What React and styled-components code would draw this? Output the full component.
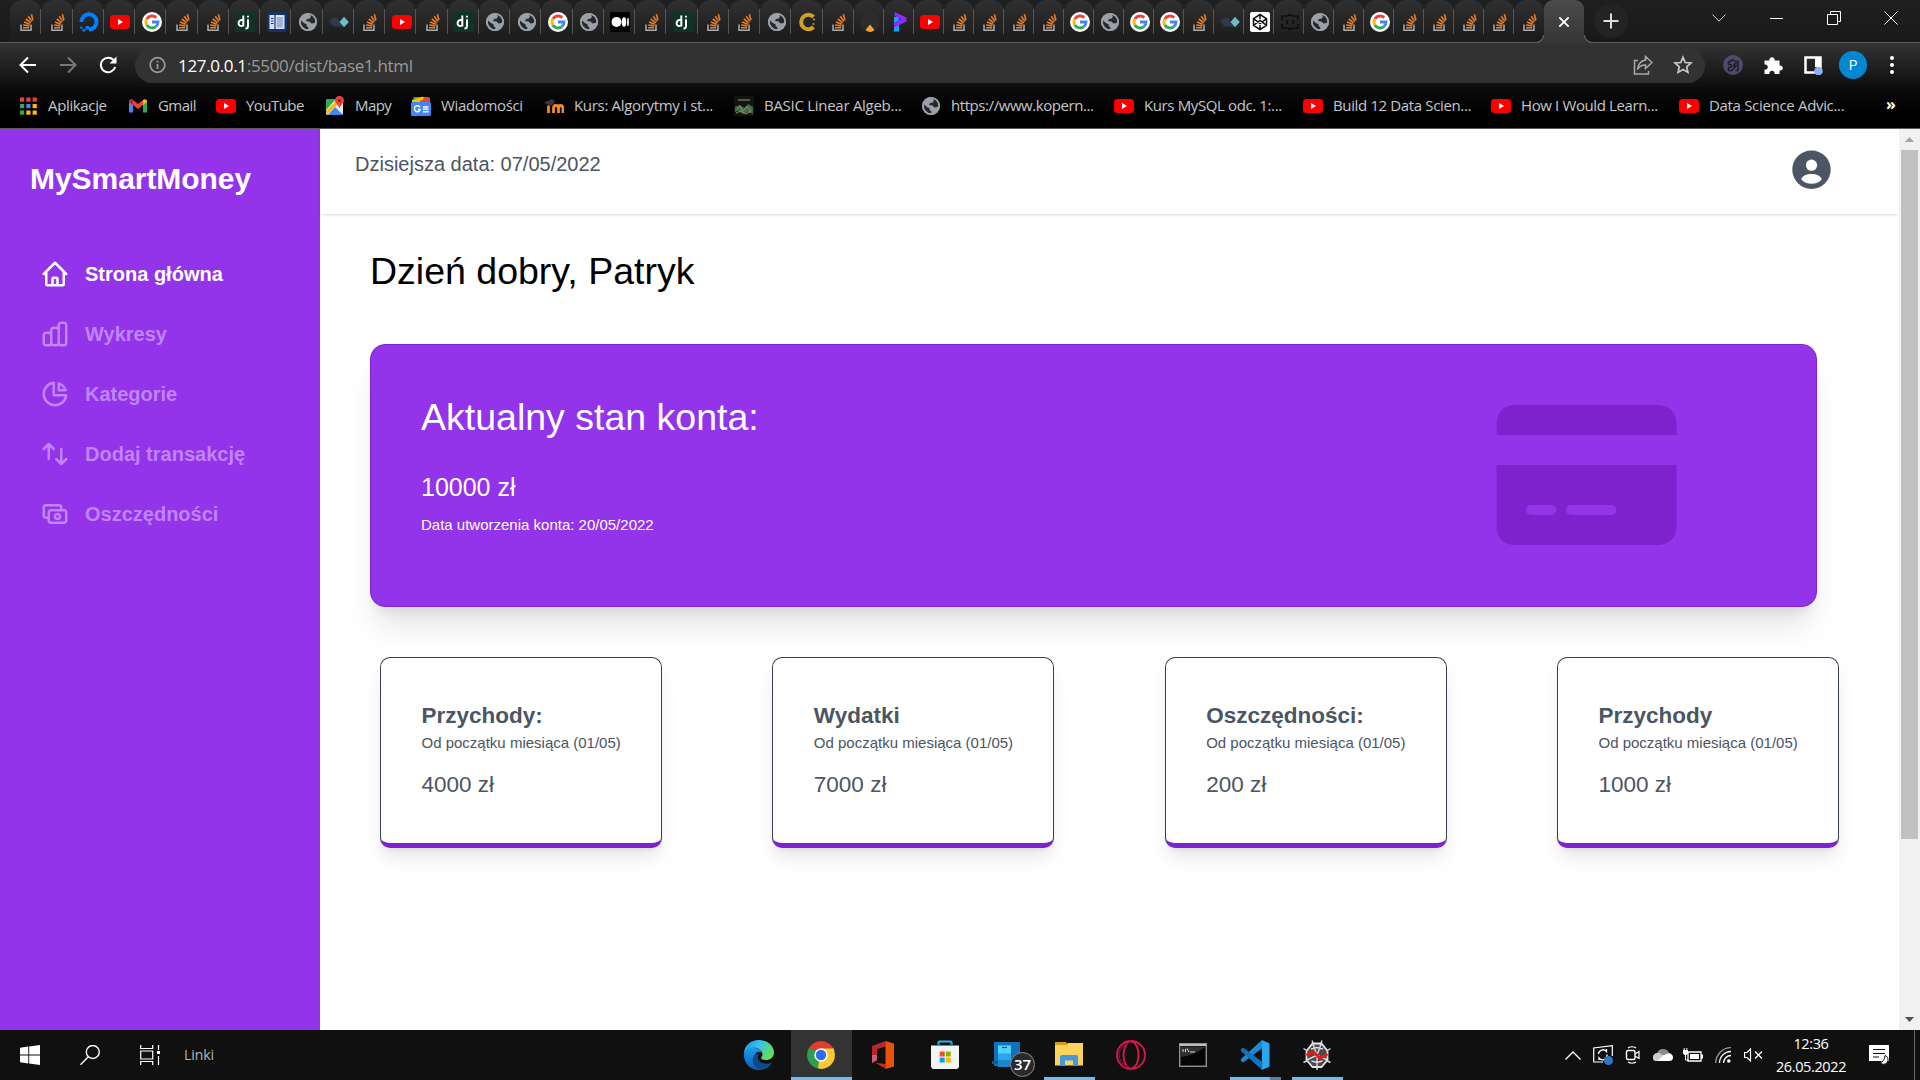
import React from "react";
import styled, { createGlobalStyle } from "styled-components";

const Global = createGlobalStyle`
  *, *::before, *::after { box-sizing: border-box; }
  body { margin: 0; overflow: hidden; background: #fff; }
  p, h1, h2, h3 { margin: 0; font-weight: 400; }
  svg { display: block; flex: none; }
`;

const sans = `"Liberation Sans", Arial, sans-serif`;
const ui = `"Open Sans", "Noto Sans", sans-serif`;

const Screen = styled.div`
  width: 1920px; height: 1080px; display: flex; flex-direction: column;
  overflow: hidden; font-family: ${sans};
`;

/* ---------- browser ---------- */
const TabStrip = styled.div`
  height: 43px; flex: none; display: flex; padding-left: 10px;
  background: linear-gradient(#1f1f1f, #191919); box-shadow: inset 0 -1px 0 #5a5a5a;
`;
const Tab = styled.div`
  width: ${(p) => p.$w}px; flex: none; height: 42px; display: flex; align-items: center; justify-content: center;
  border-radius: 12px 12px 0 0; background: linear-gradient(#303030, #1d1d1d 36px);
`;
const TabInner = styled.div`
  width: 100%; height: 25px; margin-top: 1px; padding-left: 3px; display: flex; align-items: center; justify-content: center;
  border-right: 1px solid ${(p) => (p.$last ? "transparent" : "#555")};
`;
const ActiveTab = styled.div`
  position: relative; width: 40px; height: 43px; flex: none; display: flex; align-items: center; justify-content: center;
  background: linear-gradient(#4b4b4b, #353535); border-radius: 9px 9px 0 0;
  &::before, &::after { content: ""; position: absolute; bottom: 0; width: 8px; height: 8px; }
  &::before { right: 100%; background: radial-gradient(circle at 0 0, #1a1a1a 6.5px, #5a5a5a 7px, #5a5a5a 7.8px, #353535 8.3px); }
  &::after { left: 100%; background: radial-gradient(circle at 100% 0, #1a1a1a 6.5px, #5a5a5a 7px, #5a5a5a 7.8px, #353535 8.3px); }
`;
const NewTab = styled.div`
  width: 34px; height: 34px; margin: 4px 0 0 10px; border-radius: 50%; background: #232323;
  display: flex; align-items: center; justify-content: center;
`;
const WindowButtons = styled.div`
  margin-left: auto; height: 36px; display: flex; align-items: center;
`;
const WinBtn = styled.div`
  width: 57.4px; display: flex; justify-content: center;
`;
const Toolbar = styled.div`
  height: 44px; flex: none; display: flex; align-items: center; padding: 0 8px;
  background: linear-gradient(#343434, #0e0e0e);
`;
const ToolBtn = styled.div`
  width: ${(p) => p.$w || 40}px; flex: none; display: flex; align-items: center; justify-content: center;
`;
const Omnibox = styled.div`
  width: 1570px; height: 35px; margin-left: 7px; margin-right: 8px; border-radius: 18px; background: #323232;
  display: flex; align-items: center; padding: 0 2px 0 12px;
`;
const Url = styled.div`
  flex: 1; margin-left: 11px; padding-top: 1px; font: 17px/24px ${ui}; letter-spacing: -0.33px; color: #9a9a9a;
  span { color: #fff; }
`;
const Profile = styled.div`
  width: 28px; height: 28px; border-radius: 50%; background: #0288d1; color: #fff;
  font: 15px/27px ${ui}; text-align: center;
`;
const Bookmarks = styled.div`
  height: 42px; flex: none; display: flex; align-items: center; padding: 0 0 4px 18px;
  background: linear-gradient(#0b0b0b, #000 30px); box-shadow: inset 0 -1px 0 #5c5c5c;
`;
const Bookmark = styled.div`
  width: ${(p) => p.$w}px; flex: none; display: flex; align-items: center; gap: 10px; white-space: nowrap;
  font: 15px/22px ${ui}; letter-spacing: ${(p) => p.$ls}px; color: #c4c6ca;
  span { margin-top: -2px; }
`;
const More = styled.div`
  font: 700 16px/20px ${ui}; color: #fff; margin: -5px 0 0 19px;
`;

/* ---------- page ---------- */
const Viewport = styled.div`
  height: 901px; flex: none; display: flex; background: #fff;
`;
const Sidebar = styled.aside`
  width: 320px; flex: none; background: #9333ea; padding: 31px 30px 0; display: flex; flex-direction: column;
`;
const Brand = styled.h1`
  font-weight: 700; font-size: 30px; line-height: 37px; letter-spacing: -0.05px; color: #fff;
`;
const Nav = styled.nav`
  margin-top: 47px; display: flex; flex-direction: column;
`;
const NavItem = styled.div`
  height: 60px; padding-left: 10px; display: flex; align-items: center; gap: 15px;
  font-weight: 700; font-size: 20px; line-height: 25px; color: ${(p) => (p.$active ? "#fff" : "#c084fc")};
`;
const Main = styled.main`
  width: 1579px; flex: none; display: flex; flex-direction: column;
`;
const Header = styled.header`
  height: 85px; flex: none; padding: 21px 67px 0 35px; display: flex; justify-content: space-between; align-items: flex-start;
  color: #4b5563; font-size: 20px; line-height: 25px;
  box-shadow: 0 1px 3.75px rgba(0,0,0,.1), 0 1px 2.5px -1.25px rgba(0,0,0,.1);
  p { margin-top: 2px; }
`;
const Content = styled.section`
  padding: 35px 0 0 50px; display: flex; flex-direction: column;
`;
const Greeting = styled.h2`
  font-size: 37.5px; line-height: 45px; color: #000;
`;
const Balance = styled.div`
  width: 1447px; height: 263px; margin-top: 50px; padding: 50px 139px 0 50px; border: 1px solid #7e22ce; border-radius: 15px;
  background: #9333ea; color: #fff; display: flex; justify-content: space-between; align-items: flex-start;
  box-shadow: 0 25px 31.25px -6.25px rgba(0,0,0,.1), 0 10px 12.5px -7.5px rgba(0,0,0,.1);
`;
const BalanceTitle = styled.h3`
  font-size: 37.5px; line-height: 45px;
`;
const BalanceAmount = styled.p`
  margin-top: 32px; font-size: 25px; line-height: 30px;
`;
const BalanceNote = styled.p`
  margin-top: 13px; font-size: 15px; line-height: 20px;
`;
const Stats = styled.div`
  width: 1459px; margin: 50px 0 0 10px; display: flex; justify-content: space-between;
`;
const StatCard = styled.div`
  width: 282px; height: 191px; padding: 43px 0 0 40.5px; border: 1px solid #374151; border-bottom: 5px solid #7e22ce;
  border-radius: 10px; background: #fff; color: #4b5563;
  box-shadow: 0 12.5px 18.75px -3.75px rgba(0,0,0,.1), 0 5px 7.5px -5px rgba(0,0,0,.1);
`;
const StatTitle = styled.h3`
  font-weight: 700; font-size: 22.5px; line-height: 30px;
`;
const StatNote = styled.p`
  margin-top: 2px; font-size: 15px; line-height: 20px;
`;
const StatAmount = styled.p`
  margin-top: 17px; font-size: 22.5px; line-height: 30px;
`;
const Scrollbar = styled.div`
  width: 21px; flex: none; background: #f1f1f1; display: flex; flex-direction: column; align-items: center;
`;
const ScrollArrow = styled.div`
  height: 21px; width: 21px; display: flex; align-items: center; justify-content: center;
`;
const Thumb = styled.div`
  width: 17px; height: 689px; margin-bottom: auto; background: #c1c1c1;
`;

/* ---------- taskbar ---------- */
const Taskbar = styled.footer`
  height: 50px; flex: none; background: #101010; display: flex; color: #fff; font-family: ${ui};
`;
const SysBtn = styled.div`
  width: 60px; height: 50px; display: flex; align-items: center; justify-content: center;
`;
const Links = styled.div`
  width: 549px; padding-left: 4px; font-size: 14px; line-height: 49px; letter-spacing: -0.1px; color: #b5b5b5;
`;
const TaskApp = styled.div`
  position: relative; width: 62px; height: 50px; flex: none; display: flex; align-items: center; justify-content: center;
  background: ${(p) => (p.$focus ? "linear-gradient(90deg, #333 61px, transparent 61px)" : "transparent")};
  & > svg { margin-right: 2px; }
  &::after {
    content: ""; position: absolute; bottom: 0; left: ${(p) => (p.$focus ? 0 : 5)}px; right: ${(p) => (p.$focus ? 1 : 6)}px; height: 3px;
    background: ${(p) => (p.$split ? "linear-gradient(90deg, #76b9ed 40px, #56809f 40px)" : p.$open ? "#76b9ed" : "transparent")};
  }
`;
const Badge = styled.span`
  position: absolute; left: 33px; top: 22px; width: 25px; height: 25px; border-radius: 50%; background: #2a2a2a;
  border: 1px solid #8b8b8b; font: 600 15px/22px ${ui}; text-align: center;
`;
const Tray = styled.div`
  margin-left: auto; display: flex; align-items: center;
`;
const TrayBtn = styled.div`
  width: 30px; display: flex; justify-content: center;
`;
const Clock = styled.div`
  width: 86px; text-align: center; font-size: 14.5px; line-height: 23px; letter-spacing: -0.38px; padding-bottom: 1px;
`;
const Notice = styled.div`
  width: 50px; display: flex; justify-content: center;
`;
const ShowDesktop = styled.div`
  width: 6px; height: 50px; border-left: 1px solid #666; margin-left: 10px;
`;

/* ---------- drawings ---------- */
const Svg = ({ s = 20, w, h, vb = "0 0 20 20", children, ...r }) => (
  <svg width={w || s} height={h || s} viewBox={vb} fill="none" {...r}>{children}</svg>
);

const Stack = () => (
  <Svg>
    <path d="M4 12.5V18.2H14V12.5" stroke="#a3adb8" strokeWidth="1.5" />
    <path d="M6 15.8h6.2M6.2 13l6.1.9M7 10.1l5.8 2.1M8.8 7l5 3.8M11.2 4.2l3.7 5.2M14.4 2.3l1.5 6" stroke="#ee7a22" strokeWidth="1.6" />
  </Svg>
);
const YouTube = () => (
  <Svg><rect x="0" y="3" width="20" height="14" rx="3.5" fill="#f00" /><path d="M8 7l5 3-5 3z" fill="#fff" /></Svg>
);
const Google = () => (
  <Svg>
    <circle cx="10" cy="10" r="10" fill="#fff" />
    <g strokeWidth="2.9">
      <path d="M4.8 7A6 6 0 0 1 14.2 5.7" stroke="#ea4335" />
      <path d="M4.8 13A6 6 0 0 1 4.8 7" stroke="#fbbc05" />
      <path d="M14 14.5A6 6 0 0 1 4.8 13" stroke="#34a853" />
      <path d="M10 10h6A6 6 0 0 1 14 14.5" stroke="#4285f4" />
    </g>
  </Svg>
);
const Globe = () => (
  <Svg>
    <circle cx="10" cy="10" r="9" fill="#9aa0a6" />
    <path d="M3 8.5l3.5 3 2 .5v2l2 1.5-.5 2.2A8 8 0 0 1 3 8.5zM9 2.6l2.2 0 1.8 1.4-1 2.5-3 .5-1 2 3.5.5 2 2 3-.5 1-1.5A7.5 7.5 0 0 0 12 2.5z" fill="#26282b" />
    <circle cx="10" cy="10" r="8.2" stroke="#9aa0a6" strokeWidth="1.7" />
  </Svg>
);
const Django = () => (
  <Svg>
    <rect width="20" height="20" fill="#103328" />
    <path d="M8.3 3.5V13.6Q3.6 15 3.6 11.2T8.3 8.2M13 7.2V14Q13 16.5 10.5 16.5M13 3.8V5.5" stroke="#fff" strokeWidth="2" />
  </Svg>
);
const Ocean = () => (
  <Svg>
    <path d="M10 17.5A7.6 7.6 0 1 0 2.4 10" stroke="#0080ff" strokeWidth="4" />
    <path d="M6.5 14h3.5v3.5h-3.5zM3.5 17h3v2.5h-3zM1.2 14.5h2.3v2.3h-2.3z" fill="#0080ff" />
  </Svg>
);
const Board = () => (
  <Svg>
    <rect width="20" height="20" rx="3" fill="#14336b" /><rect x="2.5" y="3" width="15" height="14" fill="#d7e1f2" />
    <path d="M8 3v14" stroke="#14336b" strokeWidth="1.2" /><path d="M4 6.5h2.5M4 9h2.5M4 11.5h2.5" stroke="#14336b" />
    <rect x="9.8" y="5" width="6" height="10.5" fill="#9db1d3" />
  </Svg>
);
const Diamonds = () => (
  <Svg><path d="M0 10l4-4.5h4l6 9H5z" fill="#2e3a4c" /><path d="M15 4.8L19.8 10 15 15.2 10.5 10z" fill="#74b9cb" /></Svg>
);
const Medium = () => (
  <Svg><rect width="20" height="20" rx="1" fill="#000" /><circle cx="6.5" cy="10" r="5" fill="#fff" /><ellipse cx="14" cy="10" rx="2.2" ry="4.7" fill="#fff" /><ellipse cx="18" cy="10" rx=".9" ry="4.3" fill="#fff" /></Svg>
);
const GoldC = () => (
  <Svg><path d="M15.5 5A7.2 7.2 0 1 0 15.5 15" stroke="#cf9f27" strokeWidth="4" /><path d="M15 7.5h2M14.5 12h2" stroke="#cf9f27" strokeWidth="1.5" /></Svg>
);
const DarkBall = () => (
  <Svg><circle cx="10" cy="10" r="10" fill="#2e2b2e" /><path d="M5.500 18L10 12.500l4.500 5.500Q10 22 5.500 18z" fill="#f2a134" /></Svg>
);
const PurpleP = () => (
  <Svg><path d="M4 5h5v14.500H4z" fill="#11a0ff" /><path d="M4.500 0L16.500 5.500v4L4 15.500V10.500l7-3.500L4.500 4z" fill="#8b2cf5" /></Svg>
);
const CodePen = () => (
  <Svg>
    <rect width="20" height="20" rx="2" fill="#fff" />
    <path d="M10 2.5l6.5 4.2v6.6L10 17.5l-6.5-4.2V6.7zM10 2.5V7M10 13v4.5M3.500 6.700L10 11.500l6.500-4.800M3.500 13.300L10 8.500l6.500 4.800" stroke="#111" strokeWidth="1.5" />
  </Svg>
);
const Brackets = () => (
  <Svg><path d="M2 8V4h6l2-1.5L12 4h6v4M2 12v4h6l2 1.5 2-1.5h6v-4M7 8v4M13 8v4" stroke="#050505" strokeWidth="1.2" /></Svg>
);
const icons = { s: Stack, y: YouTube, g: Google, w: Globe, d: Django, o: Ocean, b: Board, a: Diamonds, m: Medium, c: GoldC, k: DarkBall, p: PurpleP, n: CodePen, r: Brackets };
const wideTabs = "ssoygssdbwasysdwwgwmsdsswcs".split("");
const slimTabs = "kpyssssgwggsanrwsgsssss".split("");

const AppsGrid = () => (
  <Svg>
    {["#ea4335", "#ea4335", "#ea4335", "#34a853", "#4285f4", "#fbbc05", "#34a853", "#fbbc05", "#fbbc05"].map((c, i) => (
      <rect key={i} x={2 + (i % 3) * 6.3} y={1.5 + Math.floor(i / 3) * 6.5} width="4.2" height="4.2" fill={c} />
    ))}
  </Svg>
);
const Gmail = () => (
  <Svg>
    <path d="M1 5v11.500h4V8z" fill="#4285f4" /><path d="M19 5v11.500h-4V8z" fill="#34a853" />
    <path d="M1 4.500Q3 2.500 5 4l5 4 5-4v5l-5 4-5-4-4-2.500z" fill="#ea4335" /><path d="M15 4q2-1.500 4 .5V6l-4 3z" fill="#fbbc05" /><path d="M1 4.500Q3 2.500 5 4v5L1 6z" fill="#c5221f" />
  </Svg>
);
const Maps = () => (
  <Svg>
    <rect x="1" y="3" width="17" height="16" rx="2" fill="#e8eaed" />
    <path d="M1 5q0-2 2-2h8L1 14z" fill="#34a853" /><path d="M3 19L10 11l8 8z" fill="#4285f4" /><path d="M1 15L12 4l2 3L2 19z" fill="#fbbc05" />
    <path d="M14.500 0a4.500 4.500 0 0 1 4.500 4.500c0 3-3.500 4-4.500 8-1-4-4.500-5-4.500-8A4.500 4.500 0 0 1 14.500 0z" fill="#ea4335" /><circle cx="14.500" cy="4.500" r="1.600" fill="#811411" />
  </Svg>
);
const News = () => (
  <Svg>
    <path d="M2.500 1h15v6h-15z" fill="#34a853" /><path d="M1 4l11-3.500 2 6H1z" fill="#fbbc05" /><path d="M9 5l7-4 3 1v6H9z" fill="#ea4335" />
    <rect x="0" y="6" width="20" height="14" rx="1.5" fill="#4285f4" />
    <path d="M9 11.200A3 3 0 1 0 9.300 13.500H6.800M12 11h5.500M12 13.300h5.500M12 15.700h5.500" stroke="#fff" strokeWidth="1.4" />
  </Svg>
);
const Moodle = () => (
  <Svg>
    <path d="M4.500 17V9.500M9.500 17v-4.500q0-3 2.500-3t2.500 3V17M14.500 12.500q0-3 2.200-3t2.300 3V17" stroke="#f08a24" strokeWidth="2.800" />
    <path d="M0 6.500L8 3l3 2.500-3 4-5-1z" fill="#3c3838" />
  </Svg>
);
const LinAlg = () => (
  <Svg><rect width="20" height="20" fill="#12140f" /><path d="M1 11l5-2 4 3 4-4 5 3v7l-5-2-5 2-5-3-3 1z" fill="#3f6b53" /><path d="M3 13l3-3 3 5 4-4 4 4M2 17l5-2 5 3 5-3" stroke="#a08a50" /><path d="M4 4h12" stroke="#555" strokeWidth="2" /></Svg>
);

const bookmarks = [
  ["Aplikacje", AppsGrid, 110, -0.35], ["Gmail", Gmail, 88, -0.55], ["YouTube", YouTube, 109, -0.55], ["Mapy", Maps, 86, -0.6],
  ["Wiadomości", News, 133, -0.35], ["Kurs: Algorytmy i st...", Moodle, 190, -0.32], ["BASIC Linear Algeb...", LinAlg, 187, -0.28],
  ["https://www.kopern...", Globe, 193, -0.43], ["Kurs MySQL odc. 1:...", YouTube, 189, -0.38], ["Build 12 Data Scien...", YouTube, 188, -0.36],
  ["How I Would Learn...", YouTube, 188, -0.38], ["Data Science Advic...", YouTube, 188, -0.32],
];

const navItems = [
  ["Strona główna", ["M3 12l2-2m0 0l7-7 7 7M5 10v10a1 1 0 001 1h3m10-11l2 2m-2-2v10a1 1 0 01-1 1h-3m-6 0a1 1 0 001-1v-4a1 1 0 011-1h2a1 1 0 011 1v4a1 1 0 001 1m-6 0h6"]],
  ["Wykresy", ["M9 19v-6a2 2 0 00-2-2H5a2 2 0 00-2 2v6a2 2 0 002 2h2a2 2 0 002-2zm0 0V9a2 2 0 012-2h2a2 2 0 012 2v10m-6 0a2 2 0 002 2h2a2 2 0 002-2m0 0V5a2 2 0 012-2h2a2 2 0 012 2v14a2 2 0 01-2 2h-2a2 2 0 01-2-2z"]],
  ["Kategorie", ["M11 3.055A9.001 9.001 0 1020.945 13H11V3.055z", "M20.488 9H15V3.512A9.025 9.025 0 0120.488 9z"]],
  ["Dodaj transakcję", ["M7 16V4m0 0L3 8m4-4l4 4m6 0v12m0 0l4-4m-4 4l-4-4"]],
  ["Oszczędności", ["M17 9V7a2 2 0 00-2-2H5a2 2 0 00-2 2v6a2 2 0 002 2h2m2 4h10a2 2 0 002-2v-6a2 2 0 00-2-2H9a2 2 0 00-2 2v6a2 2 0 002 2zm7-5a2 2 0 11-4 0 2 2 0 014 0z"]],
];

const stats = [["Przychody:", "4000 zł"], ["Wydatki", "7000 zł"], ["Oszczędności:", "200 zł"], ["Przychody", "1000 zł"]];

const Edge = () => (
  <Svg s={30} vb="0 0 30 30">
    <defs>
      <linearGradient id="eg" x1="0" y1="0" x2="1" y2=".4"><stop offset="0" stopColor="#1a8fe0" /><stop offset=".5" stopColor="#35c1ee" /><stop offset="1" stopColor="#62dd58" /></linearGradient>
      <linearGradient id="eb" x1="0" y1="0" x2="0" y2="1"><stop offset="0" stopColor="#1b9de8" /><stop offset="1" stopColor="#0b5cb5" /></linearGradient>
    </defs>
    <path d="M0 14C0 5 7 0 15 0c9 0 15 6 15 12.500 0 5-4 7.500-8 7.500-3.500 0-5-1-5-2 0-1 1.500-1.500 1.500-4C18 10 13 7 8.500 8 4 9 1 11 0 14z" fill="url(#eg)" />
    <path d="M0 15C0 10.500 4.500 7.800 9 7.800c5 0 8 2.500 9 4.700-3-2-7-.5-7.500 4C10 23 15 29 20 29c-2 1-4 1-5 1C6.500 30 0 23.500 0 15z" fill="url(#eb)" />
    <path d="M10.500 15c-2.500 3-3 9 1.500 12.500 4 3 12 3 16-5-5 2-10 1.500-12.500-1.500-2-2-2-4.500-.5-6.500-2-1-3.500-.5-4.500.5z" fill="#114a8b" />
  </Svg>
);
const Chrome = () => (
  <Svg s={28} vb="0 0 28 28">
    <path d="M14 14L1.900 7A14 14 0 0 1 26.100 7z" fill="#e33b2e" />
    <path d="M14 14L26.100 7A14 14 0 0 1 14 28z" fill="#fcc934" /><path d="M14 14v14A14 14 0 0 1 1.900 7z" fill="#2f9e4f" />
    <path d="M14 7.500h12.300L27 9l-7 9z" fill="#fcc934" /><path d="M20 17.500L14 28l-3-1 1-7z" fill="#fcc934" /><path d="M8 17.300L1.900 7l6 2z" fill="#2f9e4f" />
    <circle cx="14" cy="14" r="6.700" fill="#fff" /><circle cx="14" cy="14" r="5.200" fill="#2c6ee8" />
  </Svg>
);
const Office = () => (
  <Svg w={24} h={28} vb="0 0 24 28">
    <path d="M14.500 0L1 5v17l5-3V8l9-2.500z" fill="#b6262c" /><path d="M1 14v8l5-3v-5z" fill="#d25a7c" />
    <path d="M14.500 0L23 2.500v23L14.500 28z" fill="#e8520a" /><path d="M4 21.500l11 1.800V28z" fill="#cf2a16" />
  </Svg>
);
const Store = () => (
  <Svg s={30} vb="0 0 30 30">
    <path d="M8.500 7V2.500Q8.500 1.500 9.500 1.500H20.500Q21.500 1.500 21.500 2.500V7" stroke="#2bb5e8" strokeWidth="2" />
    <path d="M1 5.500h28V26q0 3-3 3H4q-3 0-3-3z" fill="#f4f4f4" /><path d="M8.500 6V3M21.500 6V3" stroke="#1287bd" strokeWidth="2" />
    <path d="M9.700 11.500h5v5h-5z" fill="#f25022" /><path d="M15.800 11.500h5v5h-5z" fill="#7fba00" /><path d="M9.700 17.600h5v5h-5z" fill="#00a4ef" /><path d="M15.800 17.600h5v5h-5z" fill="#ffb900" />
  </Svg>
);
const Phone = () => (
  <Svg w={30} h={28} vb="0 0 30 28">
    <path d="M2 1h26v24H2z" fill="#1272b8" /><path d="M0 20h8v3H0z" fill="#0e5a96" />
    <path d="M6 4.500h13V26H6z" fill="#2ba6e6" /><path d="M6 4.500h13v8H6z" fill="#4fd2fb" /><path d="M6 19h13v7H6z" fill="#1a86cf" /><path d="M10 6.500h5" stroke="#13588a" strokeWidth="1.200" />
  </Svg>
);
const Folder = () => (
  <Svg s={30} vb="0 0 30 30">
    <path d="M1 2h11l2.500 3H1z" fill="#d99b16" /><path d="M1 5h28v20.500H1z" fill="#fbd25b" /><path d="M14 3h15V8H11z" fill="#fbd25b" />
    <path d="M6 17q0-2 2-2h14q2 0 2 2v9h-5v-5.500h-8V26H6z" fill="#4499dd" />
  </Svg>
);
const Opera = () => (
  <Svg s={30} vb="0 0 30 30"><circle cx="15" cy="15" r="14" stroke="#d8194a" strokeWidth="1.800" /><ellipse cx="15" cy="15" rx="7.500" ry="13.500" stroke="#d8194a" strokeWidth="1.800" /><path d="M15 1.500q-12 5-12 13.500t12 13.500" stroke="#8e1233" strokeWidth="1.200" /></Svg>
);
const Terminal = () => (
  <Svg w={28} h={24} vb="0 0 28 24"><rect x=".7" y=".7" width="26.600" height="22.600" fill="#050505" stroke="#8d939a" strokeWidth="1.400" /><path d="M1 2h26" stroke="#b9bec4" strokeWidth="2" /><path d="M1.500 14Q14 13 27 3.500H1.500z" fill="#303030" /><path d="M4 6v3M6.500 6v3M8 5.500l2 3.500M11 9h5" stroke="#ddd" /></Svg>
);
const Code = () => (
  <Svg s={30} vb="0 0 30 30"><path d="M22 0l7.500 3.500v23L22 30z" fill="#2aa7f3" /><path d="M22 0L1 19l-.3 1.500L3 22.500 22.500 8z" fill="#1f8ad2" /><path d="M22 30L1 11l-.3-1.500L3 7.500 22.500 22z" fill="#0f74bb" /></Svg>
);
const Spyder = () => (
  <Svg s={30} vb="0 0 30 30">
    <path d="M10.500 3.500h9l6 7.500v9L19.500 27h-9L4.500 20v-9z" fill="#4a4a4a" stroke="#e4e4e4" strokeWidth="1.800" />
    <path d="M10 .5l2 5M20 .5l-2 5M1.500 8.500l4 2.500M28.500 8.500l-4 2.500M1.500 22.500l4-2M28.500 22.500l-4-2M15 26v4M11 4.500l4 10.500 4-10.500M5 20l10-5 10 5M15 15v11M9 9l6-1.500L21 9M9.500 21l5.500 1.500 5.500-1.500" stroke="#ddd" strokeWidth="1.400" />
    <path d="M4.500 15.500l4.500-3h3l5 5 3-.5 5.500-3" stroke="#f01616" strokeWidth="3" />
  </Svg>
);

const taskApps = [
  { Icon: Edge }, { Icon: Chrome, open: true, focus: true }, { Icon: Office }, { Icon: Store }, { Icon: Phone, badge: 37 },
  { Icon: Folder, open: true }, { Icon: Opera }, { Icon: Terminal }, { Icon: Code, open: true, split: true }, { Icon: Spyder, open: true },
];

export default function App() {
  return (
    <Screen>
      <Global />
      <TabStrip>
        {wideTabs.map((k, i) => { const I = icons[k]; return <Tab key={i} $w={31.26}><TabInner><I /></TabInner></Tab>; })}
        {slimTabs.map((k, i) => { const I = icons[k]; return <Tab key={i} $w={30.02}><TabInner $last={i === 22}><I /></TabInner></Tab>; })}
        <ActiveTab><Svg s={14} vb="0 0 12 12"><path d="M2 2l8 8M10 2l-8 8" stroke="#fff" strokeWidth="1.6" /></Svg></ActiveTab>
        <NewTab><Svg s={16} vb="0 0 16 16"><path d="M8 .5v15M.5 8h15" stroke="#ddd" strokeWidth="2" /></Svg></NewTab>
        <WindowButtons>
          <WinBtn><Svg w={14} h={8} vb="0 0 14 8"><path d="M.5.5L7 7.200 13.500.5" stroke="#ccc" /></Svg></WinBtn>
          <WinBtn><Svg w={13} h={2} vb="0 0 13 2"><path d="M0 1.500h13" stroke="#fff" /></Svg></WinBtn>
          <WinBtn><Svg s={14} vb="0 0 14 14"><path d="M.5 3.500h10v10H.5zM3.500 3.500v-3h10v10h-3" stroke="#fff" /></Svg></WinBtn>
          <WinBtn><Svg s={14} vb="0 0 14 14"><path d="M.5.5l13 13M13.500.5l-13 13" stroke="#fff" /></Svg></WinBtn>
        </WindowButtons>
      </TabStrip>
      <Toolbar>
        <ToolBtn><Svg s={18} vb="0 0 18 18"><path d="M17 9H2M9 1.500L1.500 9 9 16.500" stroke="#fff" strokeWidth="2" /></Svg></ToolBtn>
        <ToolBtn><Svg s={18} vb="0 0 18 18"><path d="M1 9h15M9 1.500L16.500 9 9 16.500" stroke="#777" strokeWidth="2" /></Svg></ToolBtn>
        <ToolBtn><Svg s={18} vb="0 0 18 18"><path d="M15 4.500A7.300 7.300 0 1 0 16.200 11" stroke="#fff" strokeWidth="2" /><path d="M17.500.5v7h-7z" fill="#fff" /></Svg></ToolBtn>
        <Omnibox>
          <Svg s={20}><circle cx="10.500" cy="10" r="7.300" stroke="#9a9a9a" strokeWidth="1.700" /><path d="M10.500 9v5M10.500 5.800v1.800" stroke="#9a9a9a" strokeWidth="1.800" /></Svg>
          <Url><span>127.0.0.1</span>:5500/dist/base1.html</Url>
          <ToolBtn><Svg s={20}><path d="M5 5.500H1.500v13.500h14V16" stroke="#aaa" strokeWidth="1.500" /><path d="M12.500 1.500l6.500 6-6.500 6v-3.500Q7 10 4.500 14.500 5.500 6 12.500 5z" stroke="#aaa" strokeWidth="1.500" /></Svg></ToolBtn>
          <ToolBtn><Svg s={20}><path d="M10 2.300l2.200 5.200 5.800.5-4.300 3.800 1.200 5.600L10 14.500l-4.900 2.900 1.200-5.600L2 8l5.800-.5z" stroke="#c8c8c8" strokeWidth="1.700" /></Svg></ToolBtn>
        </Omnibox>
        <ToolBtn><Svg s={20}><circle cx="10" cy="10" r="10" fill="#51496b" /><path d="M5.500 6.500H8q1.500-4 3.500 0H15v9h-2.500M5.500 6.500v3q4-.5 3 2.500l-3 .5v3H10M14 8.500q-4 0-3 2.500h2l-4 4" stroke="#201c29" strokeWidth="1.500" /></Svg></ToolBtn>
        <ToolBtn><Svg s={20}><path d="M1.500 5.500h5a2.600 2.600 0 1 1 5 0h5v5a2.600 2.600 0 1 1 0 5v3.500h-5a2.600 2.600 0 1 0-5 0h-5v-4.500a2.600 2.600 0 1 0 0-5z" fill="#fff" /></Svg></ToolBtn>
        <ToolBtn><Svg s={20}><path d="M2.500 2.500h15v15h-15z" stroke="#fff" strokeWidth="2.500" /><path d="M12 2v10h6V2z" fill="#fff" /><circle cx="15.500" cy="16" r="4.300" fill="#8ab4f8" /></Svg></ToolBtn>
        <ToolBtn><Profile>P</Profile></ToolBtn>
        <ToolBtn $w={38}><Svg w={6} h={20} vb="0 0 6 20"><circle cx="3" cy="3" r="2" fill="#fff" /><circle cx="3" cy="10" r="2" fill="#fff" /><circle cx="3" cy="17" r="2" fill="#fff" /></Svg></ToolBtn>
      </Toolbar>
      <Bookmarks>
        {bookmarks.map(([t, I, w, ls]) => <Bookmark key={t} $w={w} $ls={ls}><I /><span>{t}</span></Bookmark>)}
        <More>»</More>
      </Bookmarks>

      <Viewport>
        <Sidebar>
          <Brand>MySmartMoney</Brand>
          <Nav>
            {navItems.map(([t, d], i) => (
              <NavItem key={t} $active={i === 0}>
                <Svg s={30} vb="0 0 24 24" stroke="currentColor" strokeWidth="2" strokeLinecap="round" strokeLinejoin="round">{d.map((x) => <path key={x} d={x} />)}</Svg>
                {t}
              </NavItem>
            ))}
          </Nav>
        </Sidebar>
        <Main>
          <Header>
            <p>Dzisiejsza data: 07/05/2022</p>
            <Svg s={40} vb="-20 -20 40 40">
              <circle cx="-.5" cy="-.3" r="19.200" fill="#4b5563" /><circle cx="-.5" cy="-4.800" r="5.600" fill="#fff" />
              <path d="M-10.800 9.200C-9.500 5.700-5.500 3.900-.5 3.900S8.500 5.700 9.800 9.200C7.500 12.200 3.500 13.700-.5 13.700S-8.500 12.200-10.800 9.200z" fill="#fff" />
            </Svg>
          </Header>
          <Content>
            <Greeting>Dzień dobry, Patryk</Greeting>
            <Balance>
              <div>
                <BalanceTitle>Aktualny stan konta:</BalanceTitle>
                <BalanceAmount>10000 zł</BalanceAmount>
                <BalanceNote>Data utworzenia konta: 20/05/2022</BalanceNote>
              </div>
              <Svg w={181} h={160} vb="0 0 181 160">
                <path d="M.5 40V30Q.5 10 20.500 10H160Q180.500 10 180.500 30V40zM.5 70H180.500V130Q180.500 150 160 150H20.500Q.5 150 .5 130z" fill="#7e22ce" />
                <rect x="30" y="110" width="30.500" height="10" rx="5" fill="#9333ea" /><rect x="70" y="110" width="50.500" height="10" rx="5" fill="#9333ea" />
              </Svg>
            </Balance>
            <Stats>
              {stats.map(([t, a]) => (
                <StatCard key={t}>
                  <StatTitle>{t}</StatTitle>
                  <StatNote>Od początku miesiąca (01/05)</StatNote>
                  <StatAmount>{a}</StatAmount>
                </StatCard>
              ))}
            </Stats>
          </Content>
        </Main>
        <Scrollbar>
          <ScrollArrow><Svg w={9} h={5} vb="0 0 9 5"><path d="M4.500 0L9 5H0z" fill="#a3a3a3" /></Svg></ScrollArrow>
          <Thumb />
          <ScrollArrow><Svg w={9} h={5} vb="0 0 9 5"><path d="M4.500 5L9 0H0z" fill="#505050" /></Svg></ScrollArrow>
        </Scrollbar>
      </Viewport>

      <Taskbar>
        <SysBtn><Svg s={20}><path d="M0 2.800L8.300 1.600v8H0zM9.200 1.500L20 0v9.600H9.200zM0 10.500h8.300v8L0 17.300zM9.200 10.500H20V20L9.200 18.600z" fill="#fff" /></Svg></SysBtn>
        <SysBtn><Svg s={20}><circle cx="12.800" cy="7" r="6.500" stroke="#fff" strokeWidth="1.400" /><path d="M8.300 11.700L.5 19.700" stroke="#fff" strokeWidth="1.400" /></Svg></SysBtn>
        <SysBtn><Svg s={20}><path d="M.7 0v3.500h12V0M.7 6h12v8h-12zM.7 20v-3.500h12V20M18.500 0v5M18.500 11v9" stroke="#fff" strokeWidth="1.200" /><path d="M17 6h3v3h-3z" fill="#fff" /></Svg></SysBtn>
        <Links>Linki</Links>
        {taskApps.map(({ Icon, open, focus, split, badge }, i) => (
          <TaskApp key={i} $open={open} $focus={focus} $split={split}><Icon />{badge && <Badge>{badge}</Badge>}</TaskApp>
        ))}
        <Tray>
          <TrayBtn><Svg w={16} h={9} vb="0 0 16 9"><path d="M.5 8.500L8 1l7.500 7.500" stroke="#fff" strokeWidth="1.300" /></Svg></TrayBtn>
          <TrayBtn><Svg s={20}><path d="M10 17H.7V3L19.300.7V11" stroke="#fff" strokeWidth="1.200" /><path d="M5.500 9a4.500 4.500 0 0 1 8-2.500V4M14 9.500A4.500 4.500 0 0 1 6 13v2" stroke="#fff" strokeWidth="1.300" /><circle cx="15.500" cy="15.500" r="4.500" fill="#2f76c4" /></Svg></TrayBtn>
          <TrayBtn><Svg s={18} vb="0 0 18 18"><rect x="2.500" y="4.500" width="8.500" height="9" rx="1.500" stroke="#fff" strokeWidth="1.400" /><path d="M11 8l4-2.500v7L11 10M4 2q4-2.500 8 0M4 16q4 2.500 8 0" stroke="#fff" strokeWidth="1.200" /></Svg></TrayBtn>
          <TrayBtn><Svg w={20} h={14} vb="0 0 20 14"><path d="M4 6Q5 1 10 1t6 4.500L10 9z" fill="#8d8d8d" /><path d="M4 13q-4 0-4-3.500T4.500 5q3 0 5 2.500L16 5q4 1 4 4.500T16 13z" fill="#fff" /><path d="M0 9.500Q.5 5 5 5q2.500 0 5 3l-6 5Q0 13 0 9.500z" fill="#ccc" /></Svg></TrayBtn>
          <TrayBtn><Svg w={20} h={14} vb="0 0 20 14"><path d="M5 4h13v9H5z" stroke="#fff" strokeWidth="1.300" /><path d="M7 6h9v5H7zM18 6.500h2v4h-2zM0 2h5v3.500L3.500 7h-2L0 5.500z" fill="#fff" /><path d="M1.200 0v2M3.800 0v2M2.500 7v5H5" stroke="#fff" /></Svg></TrayBtn>
          <TrayBtn><Svg s={16} vb="0 0 16 16"><path d="M.7 16A15.300 15.300 0 0 1 16 .7" stroke="#999" strokeWidth="1.300" /><path d="M4.500 16A11.500 11.500 0 0 1 16 4.500M8.500 16A7.500 7.500 0 0 1 16 8.500" stroke="#fff" strokeWidth="1.300" /><circle cx="13.800" cy="14" r="1.800" fill="#fff" /></Svg></TrayBtn>
          <TrayBtn><Svg w={19} h={14} vb="0 0 19 14"><path d="M.6 4.500H3L6.500 1v12L3 9.500H.6z" stroke="#fff" strokeWidth="1.200" /><path d="M11 3.500l7 7M18 3.500l-7 7" stroke="#fff" strokeWidth="1.300" /></Svg></TrayBtn>
          <Clock>12:36<br />26.05.2022</Clock>
          <Notice><Svg s={20}><path d="M0 0h20v16h-4v3.500L12 16H0z" fill="#fff" /><path d="M4 4.500h12M4 8.500h12M4 12h6" stroke="#111" strokeWidth="1.200" /><path d="M16 10.500a4.500 4.500 0 1 1-5 7q4 0 5-7z" fill="#fff" stroke="#111" /></Svg></Notice>
          <ShowDesktop />
        </Tray>
      </Taskbar>
    </Screen>
  );
}
